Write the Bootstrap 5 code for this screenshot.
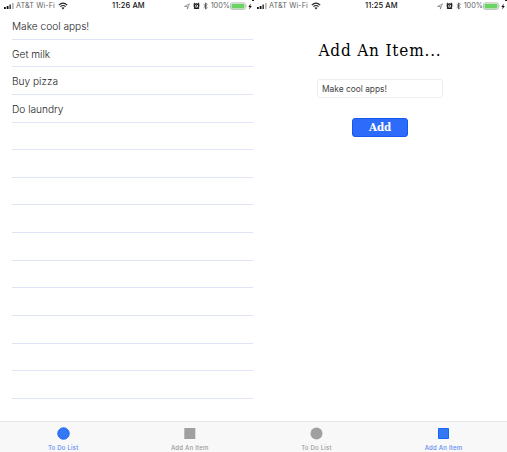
<!DOCTYPE html>
<html lang="en">
<head>
<meta charset="utf-8">
<meta name="viewport" content="width=device-width, initial-scale=1">
<title>To Do List</title>
<link href="https://cdn.jsdelivr.net/npm/bootstrap@5.3.0/dist/css/bootstrap.min.css" rel="stylesheet">
<style>
body{font-family:Inter,"Liberation Sans",sans-serif;width:507px;height:452px;color:#333}
.phone{height:452px;width:253px}
.phone.second{width:254px}
.status{height:12px;font-size:7.3px;line-height:12px;color:#666;padding:0 1px 0 4px;display:grid;grid-template-columns:108px 34px 1fr}
.phone.second .status{padding-right:2px}
.status svg{display:block;flex:none}
.status .gap-icons{gap:3px}
.carrier{letter-spacing:.06px;margin-left:1px}
.wifi-mark{margin-left:3px}
.clock{color:#111;font-weight:500;letter-spacing:.1px;font-size:7.5px}
.corner{top:0;right:-1px;width:2px;height:1px;background:#222}
.second .corner{right:0}
.todo{margin-left:12px;font-size:10.15px}
.todo li{height:27.65px;border-bottom:1px solid #e0e4f8;line-height:28px;font-weight:300;color:#222}
.tabs{height:31px;background:#f8f8f8;border-top:1px solid #e6e6e6;font-size:6px;line-height:8px;color:#999;font-weight:500;letter-spacing:.22px}
.tabs .on{color:#5b8af5}
.tabs svg{display:block;margin:5px 0 4px;fill:#a0a0a0}
.tabs .on svg{fill:#3478f6;stroke:#1766f5}
.heading{font-family:"DejaVu Serif Condensed","DejaVu Serif",serif;font-stretch:condensed;font-size:17px;line-height:22px;color:#000;letter-spacing:.82px;margin-top:27px;white-space:nowrap}
.field{width:126px;height:19px;margin-top:18px;padding:0 4px;font-size:8.4px;border:1px solid #eee;border-radius:3px;color:#444;min-height:0}
.add{width:56px;height:19px;margin-top:20px;padding:0;font-family:"DejaVu Serif Condensed","DejaVu Serif",serif;font-stretch:condensed;font-size:11.5px;font-weight:700;line-height:17px;letter-spacing:-.2px;background:#2d6bfb;border:1px solid #1557f0;border-radius:3px;color:#fff}
</style>
<script src="https://cdn.jsdelivr.net/npm/bootstrap@5.3.0/dist/js/bootstrap.bundle.min.js"></script>
</head>
<body class="bg-white overflow-hidden">
<svg class="d-none">
<symbol id="signal" viewBox="0 0 11 8"><path d="M0 5h1.8v2H0zM2.700 4h1.800v3H2.700z" fill="#111"/><path d="M5.400 2.500h1.600V7H5.400z" fill="#444"/><path d="M8.300 1h1.200v6H8.300z" fill="#999"/></symbol>
<symbol id="wifi" viewBox="0 0 10 8"><path d="M.8 3.100Q5-.9 9.200 3.100M2.400 4.700Q5 2.300 7.600 4.700" fill="none" stroke="#222" stroke-width="1.150"/><path d="M3.500 5.800Q5 4.600 6.500 5.800L5 7.400z" fill="#222"/></symbol>
<symbol id="locate" viewBox="0 0 6 7"><path d="M.5 3.500L5.400.9 3.400 6.100V3.500z" fill="none" stroke="#777" stroke-width=".7"/></symbol>
<symbol id="alarm" viewBox="0 0 7 8"><circle cx="3.500" cy="4.100" r="2.300" fill="#ddd" stroke="#111" stroke-width="1.200"/><path d="M.5 2.100L2 .9M6.500 2.100L5 .9M1.700 6.100L1 7M5.300 6.100L6 7" stroke="#111" stroke-width="1"/><path d="M3.500 2.800V4.300H2.400" fill="none" stroke="#111" stroke-width=".7"/></symbol>
<symbol id="bluetooth" viewBox="0 0 5 8"><path d="M.7 2.300L4.200 5.500 2.500 7.200V.8L4.200 2.500.7 5.700" fill="none" stroke="#444" stroke-width=".8"/></symbol>
<symbol id="battery" viewBox="0 0 17 8"><rect x=".5" y=".8" width="14" height="6.200" rx="1.500" fill="#fff" stroke="#aaa" stroke-width=".7"/><rect x="1.400" y="1.600" width="12.200" height="4.600" rx=".7" fill="#6bd264"/><path d="M15.400 2.700q1.100 1.200 0 2.400z" fill="#aaa"/></symbol>
<symbol id="bolt" viewBox="0 0 4 7"><path d="M2.800.5L.3 3.900H1.700L1.200 6.500 3.800 3H2.300z" fill="#111"/></symbol>
</svg>
<main class="d-flex">
<section class="phone d-flex flex-column position-relative">
  <div class="status">
    <div class="d-flex align-items-center"><svg width="11" height="8"><use href="#signal"/></svg><span class="carrier">AT&amp;T Wi-Fi</span><svg class="wifi-mark" width="10" height="8"><use href="#wifi"/></svg></div>
    <div class="clock text-nowrap">11:26 AM</div>
    <div class="d-flex align-items-center justify-content-end"><span class="d-flex align-items-center gap-icons"><svg width="6" height="7"><use href="#locate"/></svg><svg width="7" height="8"><use href="#alarm"/></svg><svg width="5" height="8"><use href="#bluetooth"/></svg><span>100%</span></span><svg width="18" height="8.500"><use href="#battery"/></svg><svg width="4" height="7"><use href="#bolt"/></svg></div>
  </div>
  <i class="corner position-absolute"></i>
  <ul class="todo list-unstyled mb-0">
    <li>Make cool apps!</li><li>Get milk</li><li>Buy pizza</li><li>Do laundry</li>
    <li></li><li></li><li></li><li></li><li></li><li></li><li></li><li></li><li></li><li></li>
  </ul>
  <nav class="tabs d-flex mt-auto">
    <div class="on w-50 d-flex flex-column align-items-center"><svg width="13" height="13"><circle cx="6.500" cy="6.500" r="5.700"/></svg>To Do List</div>
    <div class="w-50 d-flex flex-column align-items-center"><svg width="13" height="13"><path d="M1.300 1h11v11h-11z"/></svg>Add An Item</div>
  </nav>
</section>
<section class="phone second d-flex flex-column position-relative">
  <div class="status">
    <div class="d-flex align-items-center"><svg width="11" height="8"><use href="#signal"/></svg><span class="carrier">AT&amp;T Wi-Fi</span><svg class="wifi-mark" width="10" height="8"><use href="#wifi"/></svg></div>
    <div class="clock text-nowrap">11:25 AM</div>
    <div class="d-flex align-items-center justify-content-end"><span class="d-flex align-items-center gap-icons"><svg width="6" height="7"><use href="#locate"/></svg><svg width="7" height="8"><use href="#alarm"/></svg><svg width="5" height="8"><use href="#bluetooth"/></svg><span>100%</span></span><svg width="18" height="8.500"><use href="#battery"/></svg><svg width="4" height="7"><use href="#bolt"/></svg></div>
  </div>
  <i class="corner position-absolute"></i>
  <div class="d-flex flex-column align-items-center">
    <h1 class="heading mb-0">Add An Item...</h1>
    <input class="form-control field" value="Make cool apps!" aria-label="Item">
    <button class="btn add">Add</button>
  </div>
  <nav class="tabs d-flex mt-auto">
    <div class="w-50 d-flex flex-column align-items-center"><svg width="13" height="13"><circle cx="6.500" cy="6.500" r="6"/></svg>To Do List</div>
    <div class="on w-50 d-flex flex-column align-items-center"><svg width="13" height="13"><path d="M1.500 1.500h10v10h-10z"/></svg>Add An Item</div>
  </nav>
</section>
</main>
</body>
</html>
